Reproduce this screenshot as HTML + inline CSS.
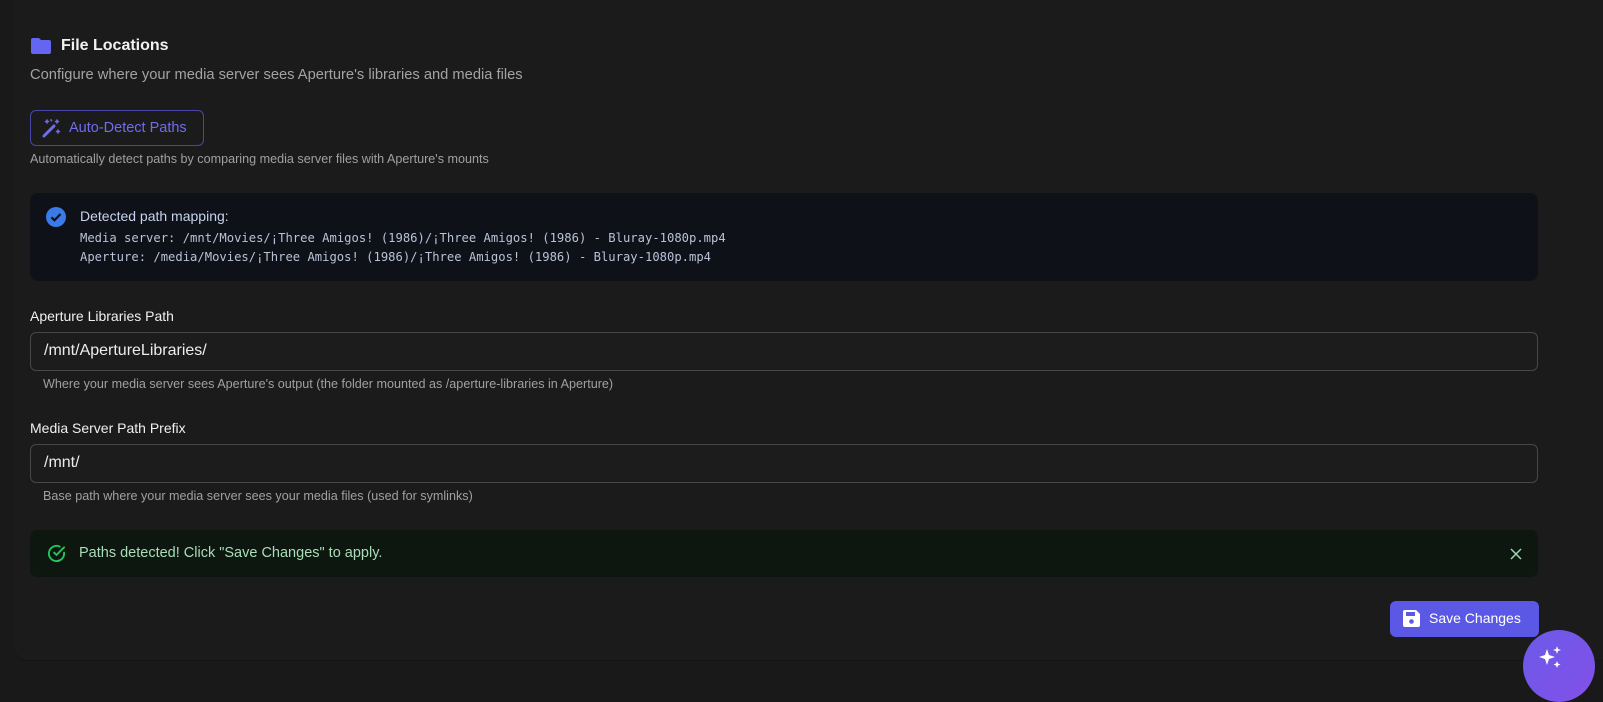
<!DOCTYPE html>
<html><head><meta charset="utf-8"><style>
*{box-sizing:border-box;margin:0;padding:0}
body{width:1603px;height:696px;background:#191919;font-family:"Liberation Sans",sans-serif;overflow:hidden;position:relative}
.card{position:absolute;left:14px;top:0;width:1600px;height:661px;background:#1b1b1b;border-bottom:1px solid #141414;border-radius:0 0 14px 14px}
.abs{position:absolute}
h2{position:absolute;left:61px;top:37px;color:#f2f2f2;font-size:16px;font-weight:bold}
.sub{left:30px;top:67px;color:#a3a3a3;font-size:14.7px}
.btn{left:30px;top:110px;width:174px;height:36px;border:1px solid #4a46a8;border-radius:6px;color:#6f6cf0;font-size:14.5px;padding:9px 0 0 38px}
.hint{color:#a0a0a0;font-size:12.6px}
.info{left:30px;top:193px;width:1508px;height:88px;background:#0f1118;border-radius:8px}
.mono{font-family:"DejaVu Sans Mono","Liberation Mono",monospace;font-size:12.2px;color:#b9c2d6}
label{position:absolute;left:30px;color:#f0f0f0;font-size:14px}
.inp{left:30px;width:1508px;height:39px;border:1px solid #474747;border-radius:6px;background:#1c1c1c;color:#ececec;font-size:16px;padding:9px 0 0 13px}
.ok{left:30px;top:530px;width:1508px;height:47px;background:#0d1710;border-radius:7px}
.save{left:1390px;top:601px;width:149px;height:36px;background:#5b58e6;border-radius:6px;color:#fff;font-size:14px;padding:9px 0 0 39px}
.fab{left:1523px;top:630px;width:72px;height:72px;border-radius:50%;background:linear-gradient(135deg,#6b5ae8,#8350e8)}
</style></head><body>
<div class="card"></div>
<svg class="abs" style="left:31px;top:38px" width="20" height="16" viewBox="0 0 20 16"><path d="M2 0h6l2 2h8a2 2 0 0 1 2 2v10a2 2 0 0 1-2 2H2a2 2 0 0 1-2-2V2a2 2 0 0 1 2-2z" fill="#6466f1"/></svg>
<h2>File Locations</h2>
<div class="abs sub">Configure where your media server sees Aperture's libraries and media files</div>
<div class="abs btn">Auto-Detect Paths</div>
<svg class="abs" style="left:42px;top:118px" width="20" height="20" viewBox="0 0 20 20" stroke="#6f6cf0" stroke-width="1.6" fill="none" stroke-linecap="round"><path d="M2 18L12 8" stroke-width="3"/><path d="M5 2v3M3.5 3.5h3M15 2v3M13.5 3.5h3M16 12v3M14.5 13.5h3M9 2l.5.5"/></svg>
<div class="abs hint" style="left:30px;top:152px">Automatically detect paths by comparing media server files with Aperture's mounts</div>
<div class="abs info"></div>
<svg class="abs" style="left:46px;top:207px" width="20" height="20" viewBox="0 0 20 20"><circle cx="10" cy="10" r="10" fill="#3b7be8"/><path d="M5.5 10.3l3 3 6-6.3" stroke="#0f1118" stroke-width="2.2" fill="none"/></svg>
<div class="abs" style="left:80px;top:208px;color:#c7d3ee;font-size:14px">Detected path mapping:</div>
<div class="abs mono" style="left:80px;top:231px">Media server: /mnt/Movies/¡Three Amigos! (1986)/¡Three Amigos! (1986) - Bluray-1080p.mp4</div>
<div class="abs mono" style="left:80px;top:250px">Aperture: /media/Movies/¡Three Amigos! (1986)/¡Three Amigos! (1986) - Bluray-1080p.mp4</div>
<label style="top:308px">Aperture Libraries Path</label>
<div class="abs inp" style="top:332px">/mnt/ApertureLibraries/</div>
<div class="abs hint" style="left:43px;top:377px">Where your media server sees Aperture's output (the folder mounted as /aperture-libraries in Aperture)</div>
<label style="top:420px">Media Server Path Prefix</label>
<div class="abs inp" style="top:444px">/mnt/</div>
<div class="abs hint" style="left:43px;top:489px">Base path where your media server sees your media files (used for symlinks)</div>
<div class="abs ok"></div>
<svg class="abs" style="left:47px;top:544px" width="19" height="19" viewBox="0 0 20 20" fill="none" stroke="#22c55e" stroke-width="2" stroke-linecap="round"><path d="M18 9.2V10a8 8 0 1 1-4.7-7.3"/><path d="M18 3.5L10 11.5l-2.5-2.5"/></svg>
<div class="abs" style="left:79px;top:545px;color:#a9dcb8;font-size:14.5px">Paths detected! Click "Save Changes" to apply.</div>
<svg class="abs" style="left:1510px;top:548px" width="12" height="12" viewBox="0 0 12 12" stroke="#9fd8b0" stroke-width="1.5"><path d="M1 1l10 10M11 1L1 11"/></svg>
<div class="abs save">Save Changes</div>
<svg class="abs" style="left:1403px;top:610px" width="17" height="17" viewBox="0 0 17 17"><path d="M2 0h11l4 4v11a2 2 0 0 1-2 2H2a2 2 0 0 1-2-2V2a2 2 0 0 1 2-2z" fill="#fff"/><rect x="3" y="2" width="9" height="4" fill="#5b58e6"/><circle cx="8.5" cy="11.5" r="2.3" fill="#5b58e6"/></svg>
<div class="abs fab"></div>
<svg class="abs" style="left:1538px;top:645px" width="26" height="26" viewBox="0 0 26 26" fill="#fff"><path d="M9 4l2 6 6 2-6 2-2 6-2-6-6-2 6-2z"/><path d="M19 1l1 3 3 1-3 1-1 3-1-3-3-1 3-1z"/><path d="M19 16l1 2.5 2.5 1-2.5 1-1 2.5-1-2.5-2.5-1 2.5-1z"/></svg>
</body></html>
